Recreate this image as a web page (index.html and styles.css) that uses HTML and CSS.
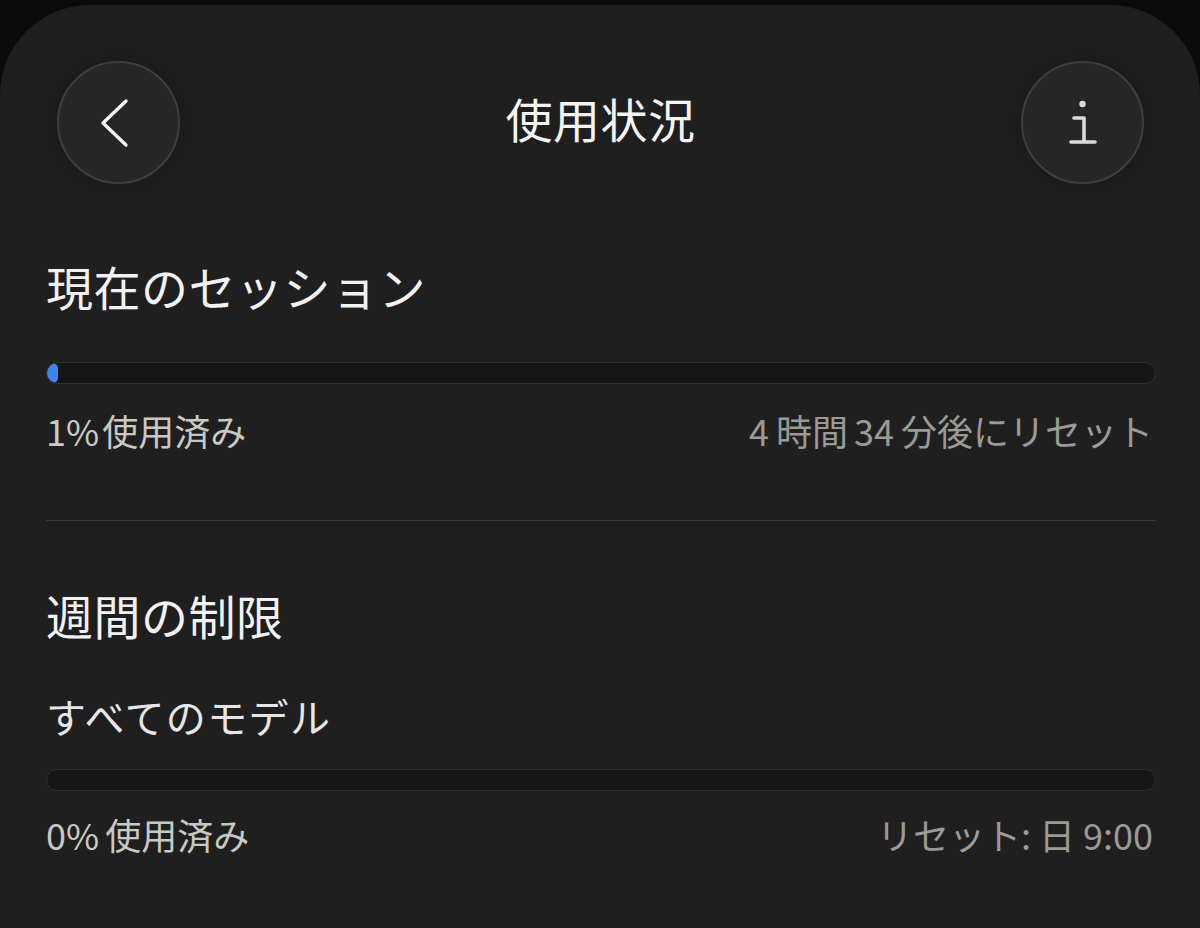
FILE: index.html
```html
<!DOCTYPE html>
<html lang="ja">

<head>
    <meta charset="UTF-8">
    <meta name="viewport" content="width=device-width, initial-scale=1.0">
    <title>使用状況</title>
    <link rel="stylesheet" href="styles.css">
</head>

<body>

    <div class="sheet">
        <div class="sheet_header">
            <button class="round_btn back_btn" aria-label="戻る">
                <svg width="40" height="60" viewBox="0 0 40 60">
                    <path d="M26 8 L3 30 L26 52" fill="none" stroke="#f4f4f4" stroke-width="3.4" stroke-linecap="round" stroke-linejoin="round" />
                </svg>
            </button>
            <div class="sheet_title">使用状況</div>
            <button class="round_btn info_btn" aria-label="情報">
                <svg width="40" height="60" viewBox="0 0 40 60">
                    <circle cx="19.5" cy="11" r="3.2" fill="#dcdcd6" />
                    <path d="M11 25 H21 V48" fill="none" stroke="#dcdcd6" stroke-width="3.6" stroke-linecap="round" stroke-linejoin="round" />
                    <path d="M8 49 H32" fill="none" stroke="#dcdcd6" stroke-width="3.6" stroke-linecap="round" />
                </svg>
            </button>
        </div>

        <div class="usage_section session">
            <div class="section_heading">現在のセッション</div>
            <div class="usage_bar">
                <div class="usage_fill" style="width: 1%"></div>
            </div>
            <div class="usage_meta">
                <span class="usage_used"><span class="pct">1%</span>使用済み</span>
                <span class="usage_reset"><span class="num">4</span>時間<span class="num">34</span>分後にリセット</span>
            </div>
        </div>

        <div class="divider"></div>

        <div class="usage_section weekly">
            <div class="section_heading">週間の制限</div>
            <div class="section_sub">すべてのモデル</div>
            <div class="usage_bar">
                <div class="usage_fill" style="width: 0%"></div>
            </div>
            <div class="usage_meta">
                <span class="usage_used"><span class="pct">0%</span>使用済み</span>
                <span class="usage_reset">リセット: 日 9:00</span>
            </div>
        </div>
    </div>

</body>

</html>
```

FILE: styles.css
```css
body {
    margin: 0;
    background: #0b0b0b;
    font-family: "Noto Sans CJK JP", "Noto Sans", sans-serif;
    color: #f2f2f2;
}

.sheet {
    margin-top: 5px;
    min-height: 923px;
    box-sizing: border-box;
    background: #1f1f1f;
    border-radius: 90px 90px 0 0;
    padding: 56px 44px 0 46px;
}

.sheet_header {
    display: flex;
    align-items: center;
    justify-content: space-between;
    height: 123px;
}

.round_btn {
    width: 123px;
    height: 123px;
    box-sizing: border-box;
    border-radius: 50%;
    border: 2px solid #3e3e3e;
    background: #262626;
    box-shadow: 0 0 24px rgba(0, 0, 0, 0.25);
    display: flex;
    align-items: center;
    justify-content: center;
    padding: 0;
}

.back_btn {
    margin-left: 11px;
}

.back_btn svg {
    margin-left: 2px;
}

.info_btn {
    margin-right: 12px;
}

.sheet_title {
    font-size: 47px;
    line-height: 56px;
    letter-spacing: 0.5px;
    color: #f4f4f4;
    padding-bottom: 9px;
}

.session {
    margin-top: 74px;
}

.section_heading {
    font-size: 47px;
    line-height: 56px;
    letter-spacing: 0.5px;
    color: #f2f2f2;
}

.section_sub {
    margin-top: 48px;
    font-size: 40px;
    line-height: 50px;
    letter-spacing: 1.4px;
    color: #e6e6e6;
}

.usage_bar {
    margin-top: 48px;
    height: 22px;
    box-sizing: border-box;
    border-radius: 11px;
    border: 1px solid #303030;
    background: #161616;
    overflow: hidden;
}

.section_sub + .usage_bar {
    margin-top: 28px;
}

.usage_fill {
    height: 100%;
    background: #3d86ec;
    border-radius: 11px;
}

.session .usage_fill {
    min-width: 10px;
}

.usage_meta {
    display: flex;
    justify-content: space-between;
    margin-top: 24px;
    font-size: 36px;
    line-height: 44px;
}

.weekly .usage_meta {
    margin-top: 21px;
}

.usage_used {
    color: #c9c9c4;
}

.pct {
    margin-right: 3px;
}

.weekly .pct {
    margin-right: 6px;
}

.usage_reset {
    color: #9a9a96;
    margin-right: 3px;
}

.num {
    margin: 0 7px 0 6px;
}

.num:first-child {
    margin-left: 0;
}

.divider {
    margin-top: 68px;
    height: 1px;
    background: #3a3a3a;
}

.weekly {
    margin-top: 66px;
}
```
